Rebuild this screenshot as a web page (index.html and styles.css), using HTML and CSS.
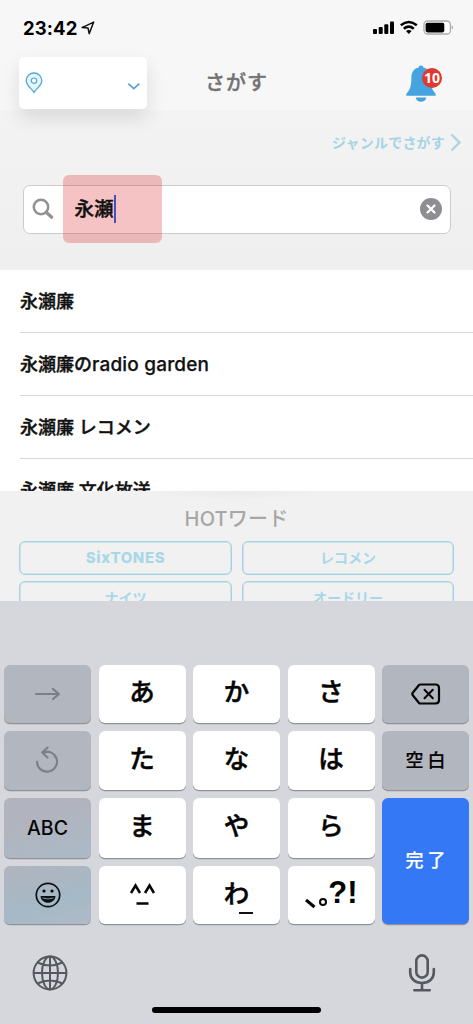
FILE: index.html
```html
<!DOCTYPE html>
<html lang="ja">
<head>
<meta charset="utf-8">
<title>さがす</title>
<link rel="stylesheet" href="styles.css">
</head>
<body>
<div class="screen">
  <div class="status">
    <span class="time">23:42</span>
    <svg class="loc" width="14" height="14" viewBox="0 0 13 13"><path d="M1 6.1 11.8 1 7.6 11.7 6.5 6.4Z" fill="none" stroke="#111" stroke-width="1.4" stroke-linejoin="round"/></svg>
    <svg class="signals" width="84" height="16" viewBox="0 0 84 16">
      <g fill="#000"><rect x="1" y="9" width="4" height="5" rx="1"/><rect x="6.7" y="7" width="4" height="7" rx="1"/><rect x="12.3" y="4.3" width="4" height="9.7" rx="1"/><rect x="18" y="1.4" width="4" height="12.6" rx="1"/></g>
      <g fill="none" stroke="#000" stroke-width="2.5"><path d="M28.8 5.2Q36.8-1.2 44.8 5.2"/><path d="M31.8 8.7Q36.8 4.5 41.8 8.7"/></g><path d="M34 11Q36.8 9 39.6 11L36.8 14Z"/>
      <rect x="52" y="1" width="26.4" height="13" rx="3.5" fill="#fff" stroke="#aaa" stroke-width="1.3"/><rect x="53.6" y="2.7" width="18.7" height="9.7" rx="1.8"/><path d="M79.8 5.5q2.5 1.8 0 4z" fill="#999"/>
    </svg>
  </div>
  <header class="header">
    <div class="area">
      <svg width="18" height="22" viewBox="0 0 18 22"><path d="M9 20.4C7 17 1.2 13.6 1.2 8.5a7.8 7.5 0 0 1 15.6 0C16.8 13.6 11 17 9 20.4Z" fill="#e4f6ff" stroke="#55a8d3" stroke-width="1.3"/><circle cx="9" cy="8.7" r="2.7" fill="#fff" stroke="#55a8d3" stroke-width="1.2"/></svg>
      <svg width="14" height="9" viewBox="0 0 14 9"><path d="m1.3 1.7 5.5 5 5.5-5" fill="none" stroke="#559fd3" stroke-width="1.6"/></svg>
    </div>
    <h1 class="title">さがす</h1>
    <div class="bell">
      <svg width="32" height="38" viewBox="0 0 32 38"><path d="M16 .5c1.800 0 2.200 1 2.300 2 5 1.200 7.300 5 7.300 10 0 10 2 12.500 5.100 16.500.5.900.2 1.700-.9 1.700H2.200c-1.100 0-1.400-.8-.9-1.700C4.400 25 6.400 22.500 6.400 12.500c0-5 2.300-8.800 7.300-10 .1-1 .5-2 2.300-2Z" fill="#45a3df"/><path d="M10.700 32.500h10.600c-.5 5.600-10.100 5.600-10.600 0Z" fill="#45a3df"/></svg>
      <span class="badge">10</span>
    </div>
  </header>
  <div class="top">
    <div class="genre"><span>ジャンルでさがす</span><svg width="12" height="19" viewBox="0 0 12 19"><path d="m1.500 1.500 8 8-8 8" fill="none" stroke="#a9d3e3" stroke-width="2.200"/></svg></div>
    <div class="search">
      <span class="mark"></span>
      <svg width="22" height="22" viewBox="0 0 22 22"><circle cx="9" cy="9" r="7.200" fill="none" stroke="#929292" stroke-width="2.500"/><path d="m14.200 14.200 5.500 5" stroke="#929292" stroke-width="3.200" stroke-linecap="round"/></svg>
      <span class="query">永瀬</span><span class="caret"></span>
      <svg class="clear" width="22" height="22" viewBox="0 0 22 22"><circle cx="11" cy="11" r="11" fill="#8e8e92"/><path d="m7.500 7.500 7 7m0-7-7 7" stroke="#fff" stroke-width="2.300" stroke-linecap="round"/></svg>
    </div>
  </div>
  <ul class="list">
    <li>永瀬廉</li>
    <li>永瀬廉の<span class="latin">radio garden</span></li>
    <li>永瀬廉 レコメン</li>
    <li>永瀬廉 文化放送</li>
  </ul>
  <section class="hot">
    <h2 class="hot-title">HOTワード</h2>
    <div class="words">
      <span class="word six">SixTONES</span><span class="word">レコメン</span>
      <span class="word">ナイツ</span><span class="word">オードリー</span>
    </div>
  </section>
  <div class="keyboard">
    <div class="keys">
      <span class="key side"><svg width="28" height="16" viewBox="0 0 28 16"><path d="M2 8h23M19 3l6 5-6 5" fill="none" stroke="#7b7f87" stroke-width="2.200" stroke-linecap="round" stroke-linejoin="round"/></svg></span>
      <span class="key">あ</span><span class="key">か</span><span class="key">さ</span>
      <span class="key side"><svg width="30" height="22" viewBox="0 0 30 22"><path d="M9.500 1.500h15Q28 1.500 28 5v12q0 3.500-3.500 3.500h-15Q8.500 20.500 7.800 19.700L1.800 12.300q-1-1.300 0-2.600L7.800 2.300Q8.500 1.500 9.500 1.500Z" fill="none" stroke="#050505" stroke-width="2.200"/><path d="m13.500 6.700 8.300 8.500m0-8.500-8.300 8.500" stroke="#050505" stroke-width="2" stroke-linecap="round"/></svg></span>
      <span class="key side undo"><svg width="24" height="28" viewBox="0 0 24 28"><path d="M2 15.800A10 10 0 1 0 7.500 6.700L12 6M12.500 1.500 7.200 6.500l5.300 5" fill="none" stroke="#7b7f87" stroke-width="2.100" stroke-linecap="round" stroke-linejoin="round"/></svg></span>
      <span class="key">た</span><span class="key">な</span><span class="key">は</span>
      <span class="key side kanji">空白</span>
      <span class="key side abc">ABC</span>
      <span class="key">ま</span><span class="key">や</span><span class="key">ら</span>
      <span class="key done kanji">完了</span>
      <span class="key side emoji"><svg width="26" height="26" viewBox="0 0 26 26"><circle cx="13" cy="13" r="11.700" fill="none" stroke="#0b1116" stroke-width="1.700"/><circle cx="9" cy="9" r="1.600"/><circle cx="17" cy="9" r="1.600"/><path d="M5.500 14h15c-.5 9-14.500 9-15 0Z" fill="#0b1116"/><path d="M7.500 15.400q5.500 2 11 0v.8q-5.500 2-11 0Z" fill="#adbac8"/></svg></span>
      <span class="key face"><svg width="27" height="25" viewBox="0 0 27 25"><path d="m2 10 4.500-7.500L11 10m5 0 4.500-7.500L25 10M7.500 20.500h12" fill="none" stroke="#050505" stroke-width="2.500"/></svg></span>
      <span class="key wa"><span>わ</span><span class="under"></span></span>
      <span class="key punct"><svg width="24" height="16" viewBox="0 0 24 16"><path d="m2 5 8.500 7" stroke="#050505" stroke-width="3"/><circle cx="19" cy="7" r="3" fill="none" stroke="#050505" stroke-width="2"/></svg><span>?!</span></span>
    </div>
    <div class="tools">
      <svg width="36" height="36" viewBox="0 0 36 36"><g fill="none" stroke="#55585f" stroke-width="2"><circle cx="18" cy="18" r="16.400"/><ellipse cx="18" cy="18" rx="8" ry="16.400"/><path d="M18 1.600v32.800M1.600 18h32.800M5.500 7.500q12.500 6 25 0M5.500 28.500q12.500-6 25 0"/></g></svg>
      <svg width="28" height="40" viewBox="0 0 28 40"><g fill="none" stroke="#55585f" stroke-width="2.600" stroke-linecap="round"><rect x="8.300" y="2.400" width="11.400" height="22.200" rx="5.700"/><path d="M2.200 16v3.500c0 6.200 4.800 10.500 11.800 10.500s11.800-4.300 11.800-10.500V16M14 30.500v6M6.300 37.200h15.400"/></g></svg>
    </div>
    <div class="home"></div>
  </div>
</div>
</body>
</html>
```
FILE: styles.css
```css
* { box-sizing: border-box; }
body { margin: 0; font-family: Inter, "Noto Sans CJK JP", sans-serif; }
svg { display: block; flex: none; }
.screen { width: 473px; height: 1024px; overflow: hidden; display: flex; flex-direction: column; background: #f7f7f7; }
.status { height: 56px; padding: 0 20px 0 23px; display: flex; align-items: center; flex: none; }
.time { font-size: 18.500px; font-weight: 700; letter-spacing: .1px; line-height: 20px; }
.loc { margin-left: 4px; }
.signals { margin-left: auto; margin-right: -3px; }
.header { height: 54px; flex: none; display: grid; grid-template-columns: 128px 1fr 128px; padding: 1px 19px 0; }
.area { position: relative; z-index: 1; height: 52px; background: #fff; border-radius: 5px; box-shadow: 0 9px 20px rgba(0,0,0,.11); display: flex; align-items: center; justify-content: space-between; padding: 0 6px; }
.area svg:last-child { margin-top: 6px; }
.title { margin: 0; text-align: center; font-size: 20px; line-height: 52px; font-weight: 500; letter-spacing: 1px; color: #737373; -webkit-text-stroke: .35px currentColor; }
.bell { position: relative; margin: 8px 0 0 79px; width: 32px; height: 38px; }
.badge { position: absolute; left: 17px; top: 2.500px; width: 20px; height: 20px; border-radius: 50%; background: #df382e; color: #fff; font: 700 14px/20px "Noto Sans", sans-serif; text-align: center; }
.top { height: 159.500px; flex: none; background: linear-gradient(#f3f3f3, #efefef); }
.genre { height: 65px; display: flex; align-items: center; justify-content: flex-end; gap: 5px; padding-right: 11px; color: #a5d4e4; font-size: 14px; font-weight: 700; letter-spacing: .2px; }
.genre span { padding-bottom: 2px; }
.search { position: relative; margin: 10px 23px 0 22.500px; width: 428px; height: 49px; border: 1px solid #ccc; border-radius: 7px; background: #fff; display: flex; align-items: center; padding: 0 8px 1px; }
.query { position: relative; margin-left: 21px; font-size: 19.500px; font-weight: 500; line-height: 28px; color: #111; -webkit-text-stroke: .45px currentColor; }
.caret { position: relative; width: 2.500px; height: 28px; background: #4c4db5; }
.clear { margin-left: auto; }
.mark { position: absolute; left: 39px; top: -11px; width: 99px; height: 68px; border-radius: 6px; background: rgba(225,55,60,.3); }
.list { margin: 0; padding: 0 0 0 20px; height: 221px; flex: none; overflow: hidden; background: #fff; list-style: none; }
.list li { height: 63px; border-bottom: 1px solid #d8d8d8; font-size: 18px; line-height: 64px; font-weight: 500; color: #111; white-space: pre; -webkit-text-stroke: .4px currentColor; }
.latin { font-size: 19px; letter-spacing: .18px; -webkit-text-stroke: .25px currentColor; }
.hot { height: 110px; flex: none; overflow: hidden; background: radial-gradient(ellipse 95px 9px at 236px 0, #eaeaea, #f1f1f1); padding: 15px 19px 0; }
.hot-title { margin: 0; text-align: center; font-size: 20px; font-weight: 500; line-height: 26px; color: #a7a7a7; letter-spacing: .2px; }
.words { margin-top: 9px; display: grid; grid-template-columns: 213px 212px; column-gap: 10px; row-gap: 6px; }
.word { height: 34px; border: 1px solid #a4d2e3; box-shadow: inset 0 0 0 .5px #abd7e7; border-radius: 6px; text-align: center; font-size: 14px; line-height: 32px; font-weight: 700; color: #a8d8e7; }
.six { font-size: 15px; font-weight: 800; letter-spacing: .6px; }
.keyboard { height: 424px; flex: none; background: #d5d7dd; padding-top: 64.500px; }
.keys { display: grid; grid-template-columns: repeat(5, 87px); grid-template-rows: 58px 58.500px 59.500px 58.500px; column-gap: 7.500px; row-gap: 8.300px; padding-left: 4px; }
.key { border-radius: 6px; background: #fff; box-shadow: 0 1.200px 0 #929399; display: flex; align-items: center; justify-content: center; font-size: 25.500px; line-height: 36px; font-weight: 500; color: #050505; padding-bottom: 4px; -webkit-text-stroke: .5px currentColor; }
.side { background: #b2b6bf; padding-bottom: 0; }
.undo { padding: 0 2px 2px 0; }
.key.kanji { font-size: 18px; letter-spacing: 4px; padding: 0 0 0 4px; -webkit-text-stroke: .2px currentColor; }
.key.abc { font-size: 19.500px; background: linear-gradient(165deg, #b1b4be 35%, #aabac7); -webkit-text-stroke: 0; }
.emoji { background: linear-gradient(165deg, #b1b4be, #a5b9c6 60%, #afbbc6); }
.done { grid-row: 3 / 5; grid-column: 5; background: #3478f6; color: #fff; }
.face { padding-bottom: 0; }
.wa { position: relative; padding-bottom: 2px; }
.under { position: absolute; right: 27px; bottom: 10px; width: 14px; height: 2px; background: #111; }
.punct { font: 700 31px/36px "Liberation Sans", sans-serif; padding: 0 0 4px; -webkit-text-stroke: 0; }
.punct svg { align-self: flex-end; margin-bottom: 9px; }
.tools { height: 66px; margin-top: 15px; display: flex; align-items: center; justify-content: space-between; padding: 2px 37px 0 32px; }
.home { width: 169px; height: 6px; border-radius: 3px; background: #000; margin: 2px auto 0; }
```
